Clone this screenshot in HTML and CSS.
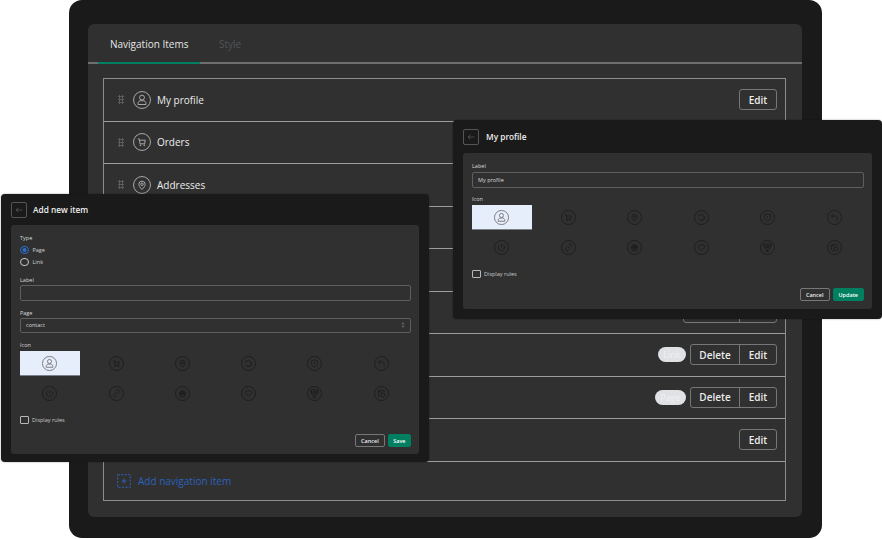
FILE: index.html
```html
<!DOCTYPE html>
<html>
<head>
    <title>Navigation Items</title>
    <meta name="viewport" content="width=device-width, initial-scale=1"/>
    <link rel="stylesheet" href="styles.css">
</head>
<body>
<svg class="sprite" xmlns="http://www.w3.org/2000/svg">
    <symbol id="i-user" viewBox="0 0 20 20"><circle cx="10" cy="10" r="9.4"/><circle cx="10" cy="7.3" r="2.7"/><path d="M5.6 15v-1.2c0-2 1.6-3 3-3h2.8c1.4 0 3 1 3 3V15z"/></symbol>
    <symbol id="i-cart" viewBox="0 0 20 20"><circle cx="10" cy="10" r="9.4"/><path d="M5.500 6.500h1.400l.9 5.500h5l.9-4H7.200"/><circle cx="8.200" cy="13.600" r=".5"/><circle cx="12.500" cy="13.600" r=".5"/></symbol>
    <symbol id="i-pin" viewBox="0 0 20 20"><circle cx="10" cy="10" r="9.4"/><path d="M10 15c-2.200-2.300-3.500-3.900-3.500-5.800a3.500 3.500 0 0 1 7 0c0 1.900-1.300 3.500-3.500 5.800z"/><circle cx="10" cy="9.200" r="1.400"/></symbol>
    <symbol id="i-refresh" viewBox="0 0 20 20"><circle cx="10" cy="10" r="9.4"/><path d="M6.300 11.500A3.900 3.900 0 1 0 7.400 7M6.200 5.800l1.200 1.300-1.500.9M13.700 9A3.900 3.900 0 0 1 8.300 13.600"/></symbol>
    <symbol id="i-shield" viewBox="0 0 20 20"><circle cx="10" cy="10" r="9.4"/><path d="M6 6.500l4-1.200 4 1.200V10c0 2.300-1.800 3.700-4 4.700C7.800 13.700 6 12.300 6 10z"/><path d="M10 8v2.300M10 11.500v.4"/></symbol>
    <symbol id="i-undo" viewBox="0 0 20 20"><circle cx="10" cy="10" r="9.4"/><path d="M8.500 5.500L6 8l2.500 2.500M6 8h4.800c1.800 0 2.700 1.300 2.700 2.900v3.100"/></symbol>
    <symbol id="i-power" viewBox="0 0 20 20"><circle cx="10" cy="10" r="9.4"/><path d="M10 5.500v4.500M7.300 6.800a4.200 4.200 0 1 0 5.400 0"/></symbol>
    <symbol id="i-link" viewBox="0 0 20 20"><circle cx="10" cy="10" r="9.4"/><path d="M9 8.500l2.500 2.500M8.500 9.700l-1.800 1.800a1.800 1.800 0 0 0 2.600 2.600l1.800-1.800M11.500 10.300l1.800-1.800a1.800 1.800 0 0 0-2.600-2.600L8.900 7.700"/></symbol>
    <symbol id="i-gift" viewBox="0 0 20 20"><circle cx="10" cy="10" r="9.4"/><path d="M6 8.300h8v2.200H6zM6.700 10.500h6.600v3.800H6.700zM10 8.300v6M10 8.300C8.700 8.300 7.300 7.400 7.800 6.300S10 6.500 10 8.300zm0 0c1.300 0 2.700-.9 2.200-2S10 6.500 10 8.300z"/></symbol>
    <symbol id="i-heart" viewBox="0 0 20 20"><circle cx="10" cy="10" r="9.4"/><path d="M10 14L6 9.700c-.9-1.800.4-3.200 1.800-3.200h4.400c1.400 0 2.700 1.400 1.800 3.200z"/></symbol>
    <symbol id="i-trophy" viewBox="0 0 20 20"><circle cx="10" cy="10" r="9.4"/><path d="M6.300 5h7.400v4.200a3.700 3.700 0 0 1-7.400 0zM6.300 6.200H4.800c0 2.300.9 3.200 1.800 3.700M13.700 6.200h1.500c0 2.300-.9 3.200-1.800 3.700M10 12.900v1.800M7.700 15.200h4.600"/><path d="M8.700 7.500h2.600v2.300H8.700z"/></symbol>
    <symbol id="i-box" viewBox="0 0 20 20"><circle cx="10" cy="10" r="9.4"/><path d="M5.800 6.800l3.700-1.400 4.100 1.400v1.700M5.800 6.800v6l3.200 1.400M5.800 6.800l3.700 1.400v1.800"/><circle cx="12" cy="12" r="2.500"/></symbol>
    <symbol id="i-add" viewBox="0 0 20 20"><rect x="1" y="1" width="18" height="18" stroke-dasharray="3 2"/><path d="M10 6.500v7M6.500 10h7"/></symbol>
    <symbol id="i-back" viewBox="0 0 14 14"><path d="M13 7H2M6 3L2 7l4 4"/></symbol>
    <symbol id="i-updown" viewBox="0 0 6 8"><path d="M3 0l2 3H1zM3 8L1 5h4z"/></symbol>
</svg>

<div class="app">
    <div class="panel">
        <div class="tabs">
            <div class="tab tab-active">Navigation Items</div>
            <div class="tab tab-off">Style</div>
        </div>
        <div class="list">
            <div class="row">
                <span class="grip"></span><svg class="row-icon"><use href="#i-user"/></svg><span class="row-name">My profile</span>
                <div class="row-end"><div class="btn-group"><button class="btn">Edit</button></div></div>
            </div>
            <div class="row">
                <span class="grip"></span><svg class="row-icon"><use href="#i-cart"/></svg><span class="row-name">Orders</span>
                <div class="row-end"><div class="btn-group"><button class="btn">Edit</button></div></div>
            </div>
            <div class="row">
                <span class="grip"></span><svg class="row-icon"><use href="#i-pin"/></svg><span class="row-name">Addresses</span>
                <div class="row-end"><div class="btn-group"><button class="btn">Edit</button></div></div>
            </div>
            <div class="row">
                <span class="grip"></span><svg class="row-icon"><use href="#i-refresh"/></svg><span class="row-name">Subscriptions</span>
                <div class="row-end"><div class="btn-group"><button class="btn">Edit</button></div></div>
            </div>
            <div class="row">
                <span class="grip"></span><svg class="row-icon"><use href="#i-shield"/></svg><span class="row-name">Security</span>
                <div class="row-end"><div class="btn-group"><button class="btn">Edit</button></div></div>
            </div>
            <div class="row">
                <span class="grip"></span><svg class="row-icon"><use href="#i-undo"/></svg><span class="row-name">Returns</span>
                <div class="row-end"><div class="btn-group"><button class="btn btn-wider">Manage</button><button class="btn">Edit</button></div></div>
            </div>
            <div class="row">
                <span class="grip"></span><svg class="row-icon"><use href="#i-link"/></svg><span class="row-name">Help</span>
                <div class="row-end"><span class="badge">Link</span><div class="btn-group"><button class="btn btn-wide">Delete</button><button class="btn">Edit</button></div></div>
            </div>
            <div class="row">
                <span class="grip"></span><svg class="row-icon"><use href="#i-gift"/></svg><span class="row-name">Contact</span>
                <div class="row-end"><span class="badge">Page</span><div class="btn-group"><button class="btn btn-wide">Delete</button><button class="btn">Edit</button></div></div>
            </div>
            <div class="row">
                <span class="grip"></span><svg class="row-icon"><use href="#i-power"/></svg><span class="row-name">Log out</span>
                <div class="row-end"><div class="btn-group"><button class="btn">Edit</button></div></div>
            </div>
            <div class="row row-add">
                <svg class="add-icon"><use href="#i-add"/></svg><span>Add navigation item</span>
            </div>
        </div>
    </div>
</div>

<div class="win win-add">
    <div class="win-head">
        <span class="back"><svg><use href="#i-back"/></svg></span>
        <span class="win-title">Add new item</span>
    </div>
    <div class="win-body">
        <div class="lbl">Type</div>
        <div class="radios">
            <div class="radio-line"><span class="radio radio-on"></span>Page</div>
            <div class="radio-line"><span class="radio"></span>Link</div>
        </div>
        <div class="lbl lbl-gap">Label</div>
        <div class="field"></div>
        <div class="lbl lbl-gap">Page</div>
        <div class="field field-select">contact<svg class="updown"><use href="#i-updown"/></svg></div>
        <div class="lbl lbl-gap">Icon</div>
        <div class="icon-grid">
            <div class="cell cell-on"><svg><use href="#i-user"/></svg></div>
            <div class="cell"><svg><use href="#i-cart"/></svg></div>
            <div class="cell"><svg><use href="#i-pin"/></svg></div>
            <div class="cell"><svg><use href="#i-refresh"/></svg></div>
            <div class="cell"><svg><use href="#i-shield"/></svg></div>
            <div class="cell"><svg><use href="#i-undo"/></svg></div>
            <div class="cell"><svg><use href="#i-power"/></svg></div>
            <div class="cell"><svg><use href="#i-link"/></svg></div>
            <div class="cell"><svg><use href="#i-gift"/></svg></div>
            <div class="cell"><svg><use href="#i-heart"/></svg></div>
            <div class="cell"><svg><use href="#i-trophy"/></svg></div>
            <div class="cell"><svg><use href="#i-box"/></svg></div>
        </div>
        <div class="check-line"><span class="check"></span>Display rules</div>
        <div class="win-foot"><button class="small">Cancel</button><button class="small small-go">Save</button></div>
    </div>
</div>

<div class="win win-edit">
    <div class="win-head">
        <span class="back"><svg><use href="#i-back"/></svg></span>
        <span class="win-title">My profile</span>
    </div>
    <div class="win-body">
        <div class="lbl">Label</div>
        <div class="field">My profile</div>
        <div class="lbl lbl-gap">Icon</div>
        <div class="icon-grid">
            <div class="cell cell-on"><svg><use href="#i-user"/></svg></div>
            <div class="cell"><svg><use href="#i-cart"/></svg></div>
            <div class="cell"><svg><use href="#i-pin"/></svg></div>
            <div class="cell"><svg><use href="#i-refresh"/></svg></div>
            <div class="cell"><svg><use href="#i-shield"/></svg></div>
            <div class="cell"><svg><use href="#i-undo"/></svg></div>
            <div class="cell"><svg><use href="#i-power"/></svg></div>
            <div class="cell"><svg><use href="#i-link"/></svg></div>
            <div class="cell"><svg><use href="#i-gift"/></svg></div>
            <div class="cell"><svg><use href="#i-heart"/></svg></div>
            <div class="cell"><svg><use href="#i-trophy"/></svg></div>
            <div class="cell"><svg><use href="#i-box"/></svg></div>
        </div>
        <div class="check-line"><span class="check"></span>Display rules</div>
        <div class="win-foot"><button class="small">Cancel</button><button class="small small-go">Update</button></div>
    </div>
</div>
</body>
</html>
```

FILE: styles.css
```css
* {
    box-sizing: border-box;
}

html,
body {
    height: 539px;
}

body {
    margin: 0;
    position: relative;
    overflow: hidden;
    background: #ffffff;
    font-family: "Open Sans", "Noto Sans", sans-serif;
    color: #e6e6e6;
}

.sprite {
    width: 0;
    height: 0;
    position: absolute;
}

svg {
    fill: none;
    stroke: currentColor;
    stroke-width: 1;
}

.app {
    width: 753px;
    height: 538px;
    margin-left: 69px;
    padding: 24px 20px 21px 19px;
    background: #1a1a1a;
    border-radius: 13px;
}

.panel {
    height: 100%;
    padding: 0 16px 0 15px;
    background: #303030;
    border-radius: 6px;
}

.tabs {
    display: flex;
    height: 40px;
    margin: 0 -16px 0 -15px;
    padding-left: 10px;
    border-bottom: 2px solid #6f6f6f;
}

.tab {
    height: 40px;
    padding: 12px 12px 0;
    font-size: 10px;
    line-height: 16px;
}

.tab-active {
    width: 102px;
    border-bottom: 2px solid #008060;
    white-space: nowrap;
}

.tab-off {
    margin-left: 7px;
    color: #51555a;
}

.list {
    margin-top: 14px;
    height: 423px;
    border: 1px solid #8c8c8c;
}

.row {
    display: flex;
    align-items: center;
    height: 42.5px;
    padding: 0 8px 0 14px;
    border-bottom: 1px solid #9c9c9c;
    font-size: 10px;
}

.row-add {
    height: 38px;
    padding-left: 13px;
    border-bottom: none;
    color: #2c62bb;
}

.grip {
    width: 6px;
    height: 9px;
    margin-right: 9px;
    background-image: radial-gradient(#5c5c5c 1px, transparent 1.1px);
    background-size: 3px 3px;
}

.row-icon {
    width: 18px;
    height: 18px;
    margin-right: 6px;
    color: #b5b5b5;
}

.add-icon {
    width: 14px;
    height: 14px;
    margin-right: 7px;
    stroke-width: 1.400;
}

.row-name {
    color: #ececec;
}

.row-end {
    display: flex;
    align-items: center;
    gap: 4px;
    margin-left: auto;
}

.btn-group {
    display: flex;
    height: 21px;
    border: 1px solid #777777;
    border-radius: 3px;
}

.btn {
    width: 36px;
    padding: 0;
    background: none;
    border: none;
    font-family: inherit;
    font-size: 10px;
    font-weight: 600;
    color: #ececec;
}

.btn-wide {
    width: 49px;
    border-right: 1px solid #777777;
}

.btn-wider {
    width: 56px;
    border-right: 1px solid #777777;
}

.badge {
    padding: 0 5.500px;
    height: 15px;
    line-height: 15px;
    border-radius: 8px;
    background: #dfe1e4;
    color: #f1f2f3;
    font-size: 9px;
}

/* floating windows */
.win {
    position: absolute;
    padding: 0 10px 8px;
    background: #1a1a1a;
    border-radius: 4px;
    box-shadow: 0 0 2px rgba(0, 0, 0, 0.4);
}

.win-add {
    left: 1px;
    top: 194px;
    width: 428px;
    height: 268px;
}

.win-edit {
    left: 453px;
    top: 120px;
    width: 429px;
    height: 199px;
}

.win-head {
    display: flex;
    align-items: center;
    height: 31px;
}

.win-edit .win-head {
    height: 33px;
}

.back {
    display: flex;
    align-items: center;
    justify-content: center;
    width: 16px;
    height: 16px;
    margin-right: 6px;
    border: 1px solid #555555;
    border-radius: 2px;
    color: #6e6e6e;
}

.back svg {
    width: 8px;
    height: 8px;
}

.win-edit .back {
    margin-right: 7px;
}

.win-title {
    font-size: 8.300px;
    font-weight: 600;
    color: #eeeeee;
}

.win-body {
    padding: 9px 8px 8px 9px;
    background: #303030;
    border-radius: 3px;
    font-size: 5.500px;
}

.win-add .win-body {
    height: 229px;
}

.win-edit .win-body {
    height: 156px;
}

.lbl {
    height: 8px;
    line-height: 8px;
    color: #d8d8d8;
}

.lbl-gap {
    margin-top: 8px;
}

.win-edit .lbl-gap {
    margin-top: 7px;
}

.radios {
    padding-top: 2px;
}

.radio-line {
    display: flex;
    align-items: center;
    height: 12px;
    color: #d0d0d0;
}

.radio {
    width: 8.500px;
    height: 8.500px;
    margin-right: 4px;
    border: 1px solid #c8c8c8;
    border-radius: 50%;
}

.radio-on {
    border-color: #2c6ecb;
    background: radial-gradient(#2c6ecb 1.800px, transparent 2.300px);
}

.field {
    height: 16px;
    margin-top: 2px;
    padding-left: 5px;
    line-height: 14px;
    border: 1px solid #5f5f5f;
    border-radius: 2px;
    color: #d8d8d8;
}

.win-add .field {
    height: 15.500px;
    margin-top: 1px;
}

.field-select {
    display: flex;
    justify-content: space-between;
    align-items: center;
    padding-right: 5px;
}

.updown {
    width: 4px;
    height: 6px;
    fill: #6e7278;
    stroke: none;
}

.icon-grid {
    display: grid;
    grid-template-columns: repeat(6, 1fr);
    grid-auto-rows: 25px;
    gap: 5px 6.600px;
    margin-top: 2px;
}

.cell {
    display: flex;
    align-items: center;
    justify-content: center;
    color: #1c1c1c;
}

.cell svg {
    width: 15px;
    height: 15px;
    stroke-width: 1.100;
}

.cell-on {
    background: #e6edfb;
    border-bottom: 1px solid #7d8088;
    color: #6a6a6a;
}

.check-line {
    display: flex;
    align-items: center;
    height: 10px;
    margin-top: 9px;
    color: #c8c8c8;
}

.check {
    width: 8.500px;
    height: 8.500px;
    margin-right: 3.500px;
    border: 1px solid #b8b8b8;
    border-radius: 1px;
}

.win-foot {
    display: flex;
    justify-content: flex-end;
    gap: 3px;
    margin-top: 9px;
}

.small {
    height: 13px;
    padding: 0 5px;
    background: none;
    border: 1px solid #777777;
    border-radius: 2px;
    font-family: inherit;
    font-size: 5.500px;
    font-weight: 600;
    color: #ececec;
}

.small-go {
    background: #008060;
    border-color: #008060;
    color: #ffffff;
}

.win-add .small-go {
    padding: 0 4.500px;
}
```
